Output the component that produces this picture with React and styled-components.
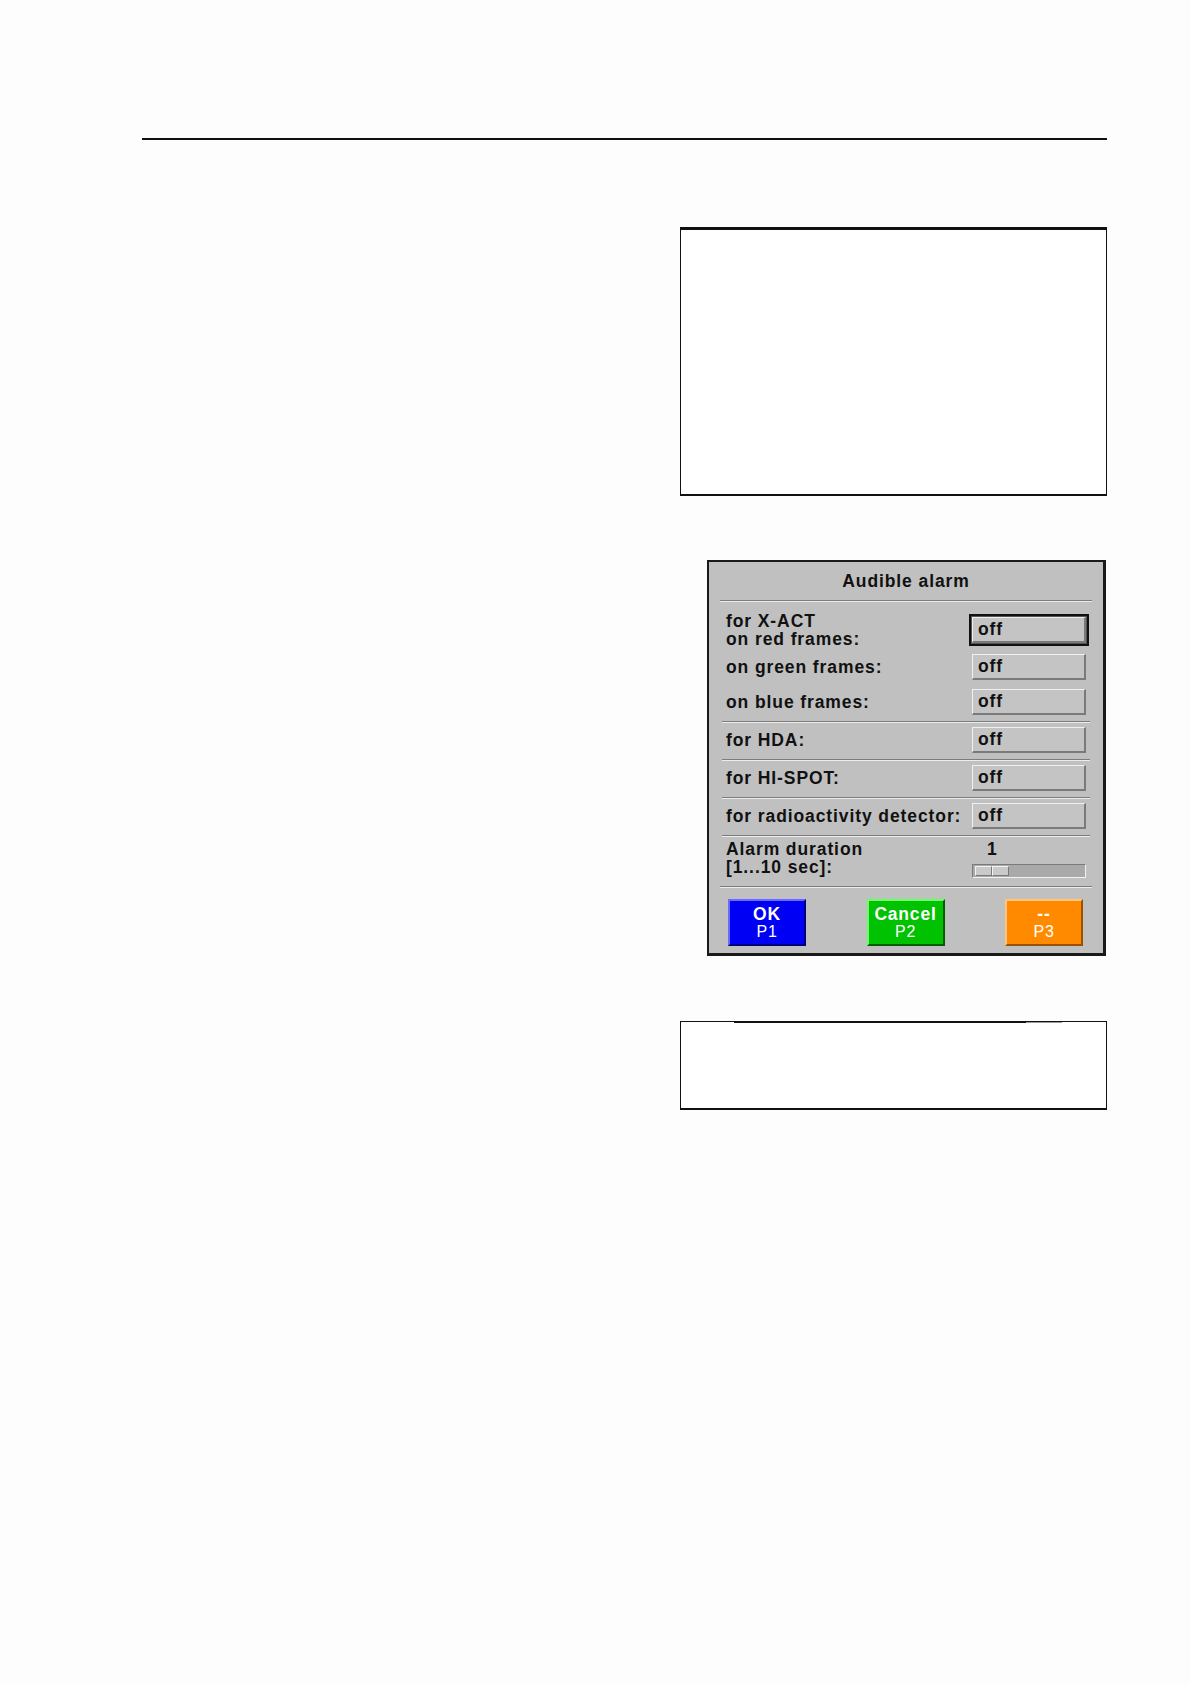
import React from 'react'
import styled, { createGlobalStyle } from 'styled-components'

const GlobalStyle = createGlobalStyle`
  html, body {
    margin: 0;
    padding: 0;
    background: #fdfdfd;
  }
  body {
    font-family: "Liberation Sans", Arial, sans-serif;
  }
`

const rows = [
  { label: 'for HDA:', value: 'off' },
  { label: 'for HI-SPOT:', value: 'off' },
  { label: 'for radioactivity detector:', value: 'off' },
]

export default function App() {
  return (
    <>
      <GlobalStyle />
      <Page>
        <Rule />
        <Column>
          <TopBox />
          <Dialog>
            <Title>Audible alarm</Title>
            <Separator $inset={11} />
            <Group>
              <Row $height={32}>
                <Label>for X-ACT<br />on red frames:</Label>
                <Value $focused>off</Value>
              </Row>
              <Row $height={28}>
                <Label>on green frames:</Label>
                <Value>off</Value>
              </Row>
              <Row $height={28}>
                <Label>on blue frames:</Label>
                <Value>off</Value>
              </Row>
            </Group>
            {rows.map((r) => (
              <React.Fragment key={r.label}>
                <Separator $inset={13} />
                <SingleRow>
                  <Label>{r.label}</Label>
                  <Value>{r.value}</Value>
                </SingleRow>
              </React.Fragment>
            ))}
            <Separator $inset={13} />
            <DurationRow>
              <Label>Alarm duration<br />[1...10 sec]:</Label>
              <SliderArea>
                <SliderValue>1</SliderValue>
                <Trough>
                  <Thumb />
                  <Thumb />
                </Trough>
              </SliderArea>
            </DurationRow>
            <Separator $inset={11} />
            <ButtonBar>
              <SoftKey $bg="#0000f4" $light="#6a6aff" $dark="#00007a">
                <strong>OK</strong>
                <span>P1</span>
              </SoftKey>
              <SoftKey $bg="#00c200" $light="#66ff66" $dark="#005e00">
                <strong>Cancel</strong>
                <span>P2</span>
              </SoftKey>
              <SoftKey $bg="#ff8a00" $light="#ffc480" $dark="#9a5200">
                <strong>--</strong>
                <span>P3</span>
              </SoftKey>
            </ButtonBar>
          </Dialog>
          <BottomBox>
            <Accent />
          </BottomBox>
        </Column>
      </Page>
    </>
  )
}

const Page = styled.div`
  width: 1190px;
  min-height: 1684px;
  box-sizing: border-box;
  padding: 138px 83px 0 142px;
`

const Rule = styled.div`
  height: 2px;
  background: #111;
`

const Column = styled.div`
  margin-left: auto;
  width: 427px;
  display: flex;
  flex-direction: column;
  align-items: flex-end;
`

const TopBox = styled.div`
  margin-top: 87px;
  width: 427px;
  height: 269px;
  box-sizing: border-box;
  border: 1px solid #111;
  border-top-width: 3px;
  border-bottom-width: 2px;
  background: #fff;
`

const Dialog = styled.div`
  margin-top: 64px;
  margin-right: 1px;
  width: 399px;
  height: 396px;
  box-sizing: border-box;
  border: 2px solid #1a1a1a;
  border-right-width: 3px;
  border-bottom-width: 3px;
  background: #c0c0c0;
  display: flex;
  flex-direction: column;
  color: #111;
  font-size: 17.5px;
  font-weight: 700;
  letter-spacing: 0.9px;
`

const Title = styled.div`
  height: 38px;
  display: flex;
  align-items: center;
  justify-content: center;
`

const Separator = styled.div`
  margin: 0 ${(p) => p.$inset}px;
  height: 1px;
  background: #7c7c7c;
  border-bottom: 1px solid #ececec;
  flex-shrink: 0;
`

const Group = styled.div`
  padding: 12px 0 5px;
  display: flex;
  flex-direction: column;
  gap: 7px;
`

const Row = styled.div`
  height: ${(p) => p.$height}px;
  padding: 0 17px;
  display: flex;
  align-items: center;
  justify-content: space-between;
`

const SingleRow = styled.div`
  height: 36px;
  padding: 0 17px 2px;
  box-sizing: border-box;
  display: flex;
  align-items: center;
  justify-content: space-between;
`

const Label = styled.div`
  line-height: 18px;
  white-space: nowrap;
`

const Value = styled.div`
  width: 114px;
  height: 26px;
  box-sizing: border-box;
  padding-left: 5px;
  display: flex;
  align-items: center;
  background: #c4c4c4;
  border-style: solid;
  border-width: 1px 2px 2px 1px;
  border-color: #f0f0f0 #7a7a7a #7a7a7a #f0f0f0;
  box-shadow: ${(p) => (p.$focused ? '0 0 0 1px #555, 0 0 0 3px #111' : 'none')};
`

const DurationRow = styled.div`
  height: 49px;
  padding: 3px 17px 0;
  box-sizing: border-box;
  display: flex;
  align-items: flex-start;
  justify-content: space-between;
`

const SliderArea = styled.div`
  width: 114px;
  display: flex;
  flex-direction: column;
`

const SliderValue = styled.div`
  padding-left: 15px;
  line-height: 18px;
  margin-bottom: 6px;
`

const Trough = styled.div`
  height: 14px;
  box-sizing: border-box;
  background: #a9a9a9;
  border-style: solid;
  border-width: 1px;
  border-color: #7a7a7a #f2f2f2 #f2f2f2 #7a7a7a;
  padding: 1px 2px;
  display: flex;
`

const Thumb = styled.div`
  width: 17px;
  height: 10px;
  box-sizing: border-box;
  background: #cacaca;
  border-style: solid;
  border-width: 1px;
  border-color: #f4f4f4 #7a7a7a #7a7a7a #f4f4f4;
`

const ButtonBar = styled.div`
  padding: 11px 20px 0 19px;
  display: flex;
  justify-content: space-between;
`

const SoftKey = styled.div`
  width: 78px;
  height: 47px;
  box-sizing: border-box;
  background: ${(p) => p.$bg};
  border-style: solid;
  border-width: 2px;
  border-color: ${(p) => `${p.$light} ${p.$dark} ${p.$dark} ${p.$light}`};
  color: #fff;
  display: flex;
  flex-direction: column;
  align-items: center;
  justify-content: center;
  letter-spacing: 0.8px;

  strong {
    font-size: 17.5px;
    line-height: 18px;
    font-weight: 700;
  }
  span {
    font-size: 16px;
    line-height: 18px;
    font-weight: 400;
  }
`

const BottomBox = styled.div`
  margin-top: 65px;
  width: 427px;
  height: 89px;
  box-sizing: border-box;
  border: 1px solid #111;
  border-bottom-width: 2px;
  background: #fff;
`

const Accent = styled.div`
  margin-left: 53px;
  width: 292px;
  height: 1px;
  background: #111;
  border-right: 36px solid #9a9a9a;
`
